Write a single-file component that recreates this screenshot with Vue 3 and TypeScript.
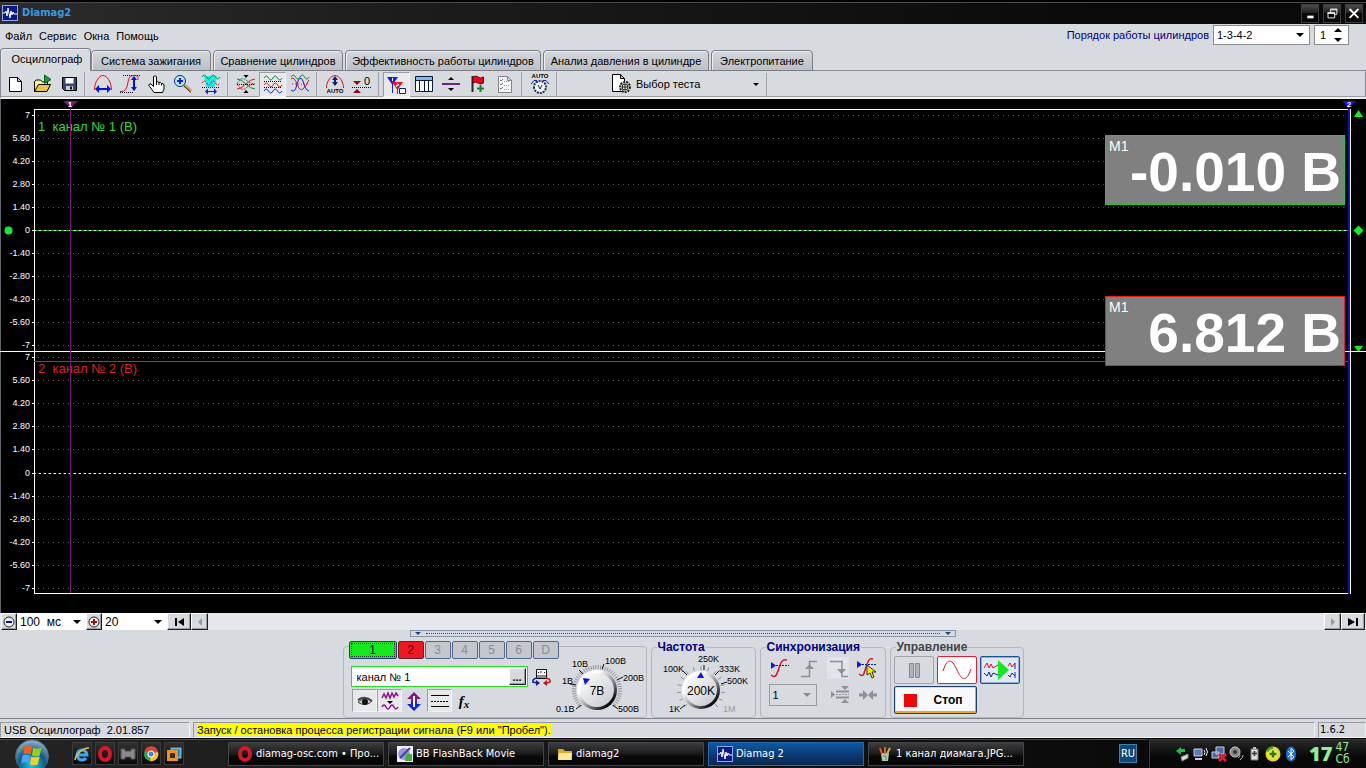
<script setup lang="ts">
import { ref } from 'vue'

interface Shape {
  d: string
  s?: string
  f?: string
  w?: number
  dash?: string
}
interface Tool {
  name: string
  shapes: Shape[]
  pressed?: boolean
  auto?: number
  text?: { x: number; y: number; t: string; size: number }
}

const wave = (y: number, a: number, x = 3): string =>
  `M${x} ${y} q2.25 ${-a} 4.5 0 t4.5 0 t4.5 0 t4.5 0`
const dots = (y: number, x1 = 3, x2 = 21): Shape => ({ d: `M${x1} ${y}.5 H${x2}`, s: '#000', dash: '1 1' })
const hArrow = (x1: number, x2: number, y: number): Shape[] => [
  { d: `M${x1} ${y} H${x2}`, s: '#0010e0', w: 2 },
  { d: `M${x1 - 1} ${y} l4 -4 v8z M${x2 + 1} ${y} l-4 -4 v8z`, f: '#0010e0' },
]
const vArrow = (x: number, y1: number, y2: number, c = '#0010e0'): Shape[] => [
  { d: `M${x} ${y1} V${y2}`, s: c, w: 2 },
  { d: `M${x} ${y1 - 1} l-3 4 h6z M${x} ${y2 + 1} l-3 -4 h6z`, f: c },
]
const RED = '#e01020'
const GREEN = '#0a8a3a'
const BLUE = '#1020e0'

const toolGroups: Tool[][] = [
  [
    { name: 'Новый', shapes: [{ d: 'M6.5 5.5 H14.5 L18.5 9.5 V19.5 H6.5z M14.5 5.5 V9.5 H18.5', s: '#000', f: '#fff' }] },
    {
      name: 'Открыть',
      shapes: [
        { d: 'M4.5 19.5 V9.5 L6.5 8 H10.5 L12.5 10 H17.5 V13', s: '#000', f: '#fff3a0' },
        { d: 'M4.5 19.5 L8.5 12.5 H20.5 L17 19.5z', s: '#000', f: '#e8c840' },
        { d: 'M14.5 3 L21 7.5 L14.5 11.5z', f: '#10a030', s: '#086020' },
      ],
    },
    {
      name: 'Сохранить',
      shapes: [
        { d: 'M5.5 5.5 H19.5 V18.5 H7.5 L5.5 16.5z', s: '#000', f: '#3c4474' },
        { d: 'M8.5 6 H16.5 V11.5 H8.5z', f: '#fff' },
        { d: 'M9 14 H16 V18 H9z', f: '#ccd' },
        { d: 'M13 14.5 H15 V17.5 H13z', f: '#111' },
      ],
    },
  ],
  [
    { name: 'Период', shapes: [{ d: 'M3.5 18 C3.5 10 8 3.5 12 3.5 S20.5 10 20.5 18', s: RED }, ...hArrow(5, 19, 17)] },
    {
      name: 'Амплитуда',
      shapes: [dots(3, 5, 22), dots(20, 2, 16), { d: 'M2 19.5 C13 21 7 3.5 15 3.5 S19 6 20 8', s: RED }, ...vArrow(16, 5, 18)],
    },
    {
      name: 'Рука',
      shapes: [{ d: 'M9 20.5 L4 13.5 Q3.5 11.5 6 12 L8.5 14.5 V4.5 Q10 3 11.5 4.5 V10 Q13 9 14 10.5 Q15.5 9.8 16.5 11.5 Q18.5 11 19 13 V17 L17.5 20.5z M11.5 10 V13 M14 10.5 V13 M16.5 11.5 V13.5', s: '#000', f: '#fff' }],
    },
    {
      name: 'Масштаб',
      shapes: [
        { d: 'M12 13 L19 19', s: '#caa060', w: 3 },
        { d: 'M12 14 L19 20.5', s: '#302010', w: 1 },
        { d: 'M2.5 9 a5.5 5.5 0 1 0 11 0 a5.5 5.5 0 1 0 -11 0', s: '#103080', f: '#b8e8ff' },
        { d: 'M8 6 V12 M5 9 H11', s: BLUE, w: 2 },
      ],
    },
    {
      name: 'Интервал',
      shapes: [
        { d: 'M5 4 H18 L15.5 15 H7.5z', f: '#20e8e8' },
        { d: wave(5, 4), s: GREEN },
        { d: wave(11, 4), s: RED, dash: '2 1' },
        dots(15),
        { d: 'M8 19.5 H16', s: BLUE },
        { d: 'M6 19.5 l3 -3 v6z M18 19.5 l-3 -3 v6z', f: BLUE },
      ],
    },
  ],
  [
    {
      name: 'Наложение',
      shapes: [
        { d: 'M3 7 Q7 7 12 12 T21 17', s: GREEN },
        { d: 'M3 17 Q7 17 12 12 T21 7', s: RED },
        { d: 'M3 12 Q7 4 12 8 T21 12', s: GREEN, dash: '2 1' },
        { d: 'M3 12 Q8 20 12 16 T21 12', s: RED, dash: '2 1' },
        dots(12),
        { d: 'M9.5 3 h5 l-2.5 3z M9.5 21 h5 l-2.5 -3z', f: '#000' },
      ],
    },
    {
      name: 'Раздельно',
      pressed: true,
      shapes: [{ d: wave(5, 4), s: GREEN }, dots(8), { d: wave(12, 4), s: RED }, dots(14), { d: wave(18, 4), s: BLUE }],
    },
    {
      name: 'Совместно',
      shapes: [
        { d: wave(5, 4), s: GREEN },
        { d: 'M3 7 Q6 4 9 12 T15 17 T21 8', s: RED },
        { d: 'M3 18 Q7 22 9 12 Q12 2 15 9 Q17 18 21 19', s: BLUE },
        { d: 'M4 12 H20', s: RED, dash: '1 2' },
      ],
    },
  ],
  [
    {
      name: 'Авто',
      auto: 21,
      shapes: [{ d: 'M3.5 16 C3.5 9 8 3.5 12 3.5 S20.5 9 20.5 16', s: RED }, ...vArrow(12, 5, 13, '#102080')],
    },
    {
      name: 'Ноль',
      text: { x: 14, y: 13, t: '0', size: 11 },
      shapes: [dots(15, 2, 22), { d: 'M3 9 h8 l-4 4z M3 21 h8 l-4 -4z', f: '#8a0820' }],
    },
  ],
  [
    {
      name: 'Маркеры',
      pressed: true,
      shapes: [
        { d: 'M2 4 H13 L7.5 12z', f: BLUE },
        { d: 'M7.5 4 V20', s: BLUE },
        { d: 'M7 9 H18 L12.5 17z', f: RED },
        { d: 'M12.5 9 V21', s: RED },
        { d: 'M7.5 5 V8 M11.5 11 H13.5 V12.5 H11.5 V14', s: '#fff' },
        { d: 'M14.5 15.5 H20.5 V20.5 H14.5z', s: '#102080', f: '#fff' },
      ],
    },
    {
      name: 'Таблица',
      shapes: [
        { d: 'M3.5 4.5 H20.5 V19.5 H3.5z', s: '#101838', f: '#fff' },
        { d: 'M4 5 H20 V8 H4z', f: '#80b8f0' },
        { d: 'M3.5 8.5 H20.5 M7.5 8 V19 M12.5 8 V19 M16.5 8 V19', s: '#101838' },
      ],
    },
    { name: 'Линия', shapes: [{ d: 'M3 12 H21', s: '#702080', w: 2 }, { d: 'M12 5 l3 3 h-6z M12 19 l3 -3 h-6z', f: '#000' }] },
    {
      name: 'Флаг',
      shapes: [
        { d: 'M6.5 4 V20', s: '#302020', w: 2 },
        { d: 'M7 5 Q10 3 12 5 T17.5 5 V11 Q15 13 12 11 T7 11z', f: '#e80818', s: '#700010' },
        { d: 'M14.5 13 V20 M11 16.5 H18', s: '#0a8a20', w: 2 },
      ],
    },
    {
      name: 'Список',
      shapes: [
        { d: 'M5.5 4.5 H14.5 L18.5 8.5 V20.5 H5.5z M14.5 4.5 V8.5 H18.5', s: '#808388', f: '#f4f4f6' },
        { d: 'M7 8 l1 1 2-2 M7 12 l1 1 2-2 M7 16 l1 1 2-2', s: '#707378' },
        { d: 'M11 9.5 H16 M11 13.5 H16 M11 17.5 H16', s: '#999', dash: '1 1' },
      ],
    },
  ],
  [
    {
      name: 'Автонастройка',
      auto: 6,
      shapes: [
        { d: 'M3 12 L6 8.5 H9 M21 12 L18 8.5 H15', s: '#1020a0' },
        { d: 'M6 15 a6 6 0 1 0 12 0 a6 6 0 1 0 -12 0', s: '#203050', f: '#f4f6fa', w: 2, dash: '2 1' },
        { d: 'M10 13 L12 17 L14 13', s: '#102080' },
      ],
    },
  ],
]

const tabs = [
  { t: 'Осциллограф', w: 91 },
  { t: 'Система зажигания', w: 120 },
  { t: 'Сравнение цилиндров', w: 130 },
  { t: 'Эффективность работы цилиндров', w: 196 },
  { t: 'Анализ давления в цилиндре', w: 166 },
  { t: 'Электропитание', w: 102 },
]
const activeTab = ref(0)
const order = ref('1-3-4-2')
const timeBase = ref('100')
const points = ref('20')
const channelName = ref('канал № 1')

const scale = ['7', '5.60', '4.20', '2.80', '1.40', '0', '-1.40', '-2.80', '-4.20', '-5.60', '-7']
const axis1 = scale.map((t, i) => ({ t, y: 16 + 23 * i }))
const axis2 = scale.map((t, i) => ({ t, y: 258 + Math.round(23.1 * i) }))
const axes = [...axis1, ...axis2]

const channels = ['1', '2', '3', '4', '5', '6', 'D']

function ticks(count: number, r1: number, r2: number): string {
  let d = ''
  for (let i = 0; i < count; i++) {
    const a = ((135 + (270 * i) / (count - 1)) * Math.PI) / 180
    d += `M${(Math.cos(a) * r1).toFixed(1)} ${(Math.sin(a) * r1).toFixed(1)}L${(Math.cos(a) * r2).toFixed(1)} ${(Math.sin(a) * r2).toFixed(1)}`
  }
  return d
}
const voltTicks = ticks(46, 21, 25)
const freqTicks = ticks(15, 20, 24)
const voltLabels = [
  { t: '0.1В', x: -41, y: 22 },
  { t: '1В', x: -35, y: -6 },
  { t: '10В', x: -25, y: -23 },
  { t: '100В', x: 8, y: -26 },
  { t: '200В', x: 26, y: -9 },
  { t: '500В', x: 21, y: 22 },
]
const freqLabels = [
  { t: '1K', x: -32, y: 22 },
  { t: '100K', x: -38, y: -18 },
  { t: '250K', x: -3, y: -28 },
  { t: '333K', x: 18, y: -18 },
  { t: '500K', x: 26, y: -6 },
]

const tasks = [
  { t: 'diamag-osc.com • Про...', icon: 'opera' },
  { t: 'BB FlashBack Movie', icon: 'flash' },
  { t: 'diamag2', icon: 'folder' },
  { t: 'Diamag 2', icon: 'diamag', active: true },
  { t: '1 канал диамага.JPG...', icon: 'paint' },
]
const quick = ['ie', 'opera', 'server', 'chrome', 'vm']
</script>

<template>
  <div class="screen">
    <header class="titlebar">
      <svg class="app-logo" viewBox="0 0 16 16">
        <rect width="16" height="16" fill="#8fa8e8" /><rect x="1" y="1" width="14" height="14" fill="#0a1a8c" />
        <path d="M1 8h2l1-2 1 5 1-8 2 10 1-7 1 4 1-3 1 2h3" fill="none" stroke="#fff" />
      </svg>
      <h1>Diamag2</h1>
      <div class="win-buttons">
        <button aria-label="Свернуть"><svg viewBox="0 0 18 19"><path d="M6 13.5h7" stroke="#fff" stroke-width="3" /></svg></button>
        <button aria-label="Восстановить">
          <svg viewBox="0 0 18 19"><path d="M7.5 8V4.5h7v6H12M4 8.5h8v6H4.5V9M4 9.5h8M7 5.5h8" fill="none" stroke="#fff" /></svg>
        </button>
        <button aria-label="Закрыть"><svg viewBox="0 0 18 19"><path d="M4 4.5l10 10M14 4.5l-10 10" stroke="#fff" stroke-width="2" /></svg></button>
      </div>
    </header>

    <div class="menubar">
      <nav>
        <a href="#">Файл</a><a href="#">Сервис</a><a href="#">Окна</a><a href="#">Помощь</a>
      </nav>
      <div class="order">
        <label for="order">Порядок работы цилиндров</label>
        <span class="combo order-combo">
          <select id="order" v-model="order"><option>1-3-4-2</option></select>
        </span>
        <span class="spin">
          <input aria-label="Цилиндр" value="1" />
          <svg viewBox="0 0 8 16"><path d="M0 5L4 1l4 4zM0 11l4 4 4-4z" /></svg>
        </span>
      </div>
    </div>

    <div class="tabs" role="tablist">
      <button
        v-for="(tab, i) in tabs"
        :key="tab.t"
        role="tab"
        class="tab"
        :class="{ active: i === activeTab }"
        :style="{ width: tab.w + 'px' }"
        @click="activeTab = i"
      >{{ tab.t }}</button>
    </div>

    <div class="toolbar">
      <div v-for="(group, g) in toolGroups" :key="g" class="tool-group">
        <button v-for="tool in group" :key="tool.name" class="tool" :class="{ pressed: tool.pressed }" :aria-label="tool.name">
          <svg viewBox="0 0 24 24">
            <path
              v-for="(p, i) in tool.shapes"
              :key="i"
              :d="p.d"
              :fill="p.f || 'none'"
              :stroke="p.s || 'none'"
              :stroke-width="p.w || 1"
              :stroke-dasharray="p.dash"
            />
            <text v-if="tool.auto" class="auto" x="12" :y="tool.auto">AUTO</text>
            <text v-if="tool.text" :x="tool.text.x" :y="tool.text.y" :font-size="tool.text.size">{{ tool.text.t }}</text>
          </svg>
        </button>
      </div>
      <button class="test-button">
        <svg viewBox="0 0 22 22">
          <path d="M2.5 1.5h8l4 4v13h-12zM10.5 1.5v4h4" fill="#fff" stroke="#000" />
          <circle cx="15" cy="14" r="5" fill="#d8d8d0" stroke="#222" stroke-width="2" stroke-dasharray="2 1" />
          <circle cx="15" cy="14" r="3" fill="#eee" stroke="#222" />
          <path d="M15 11v6M12 14h6" stroke="#222" />
        </svg>
        <span>Выбор теста</span>
        <i class="caret"></i>
      </button>
    </div>

    <main class="scope">
      <svg class="plot" font-size="9">
        <line v-for="(a, i) in axes" :key="'g' + i" x1="38" x2="99%" :y1="a.y + 0.5" :y2="a.y + 0.5" stroke="#585858" stroke-dasharray="1 4" />
        <g v-for="(a, i) in axes" :key="'a' + i">
          <text class="axis" x="30" :y="a.y + 3">{{ a.t }}</text>
          <path :d="`M32 ${a.y + 0.5}h3`" stroke="#fff" />
        </g>
        <text class="channel-label" x="38" y="32" fill="#38d838">1&nbsp; канал № 1 (В)</text>
        <text class="channel-label" x="38" y="274" fill="#d82020">2&nbsp; канал № 2 (В)</text>
        <line x1="34.5" x2="34.5" y1="10" y2="495" stroke="#fff" />
        <svg x="34" width="100%" height="514">
          <line x1="0" x2="100%" y1="10.5" y2="10.5" stroke="#fff" />
          <line x1="0" x2="100%" y1="494.5" y2="494.5" stroke="#fff" />
          <line x1="0" x2="100%" y1="131.5" y2="131.5" stroke="#10b020" />
          <line x1="0" x2="100%" y1="131.5" y2="131.5" stroke="#f0fff0" stroke-dasharray="2 3" />
          <line x1="0" x2="100%" y1="374.5" y2="374.5" stroke="#fff" stroke-dasharray="2 3" />
          <line x1="0" x2="100%" y1="262.5" y2="262.5" stroke="#e81818" />
        </svg>
        <svg x="100%" overflow="visible">
          <path d="M-15 0h15v514h-15z" fill="#000" />
          <line x1="-17" x2="-17" y1="6" y2="495" stroke="#1010c8" stroke-width="2" />
          <line x1="-15.5" x2="-15.5" y1="10" y2="495" stroke="#fff" />
          <path d="M-12 18h9l-4.5-7zM-12 247h9l-4.5 6z" fill="#10f020" />
          <path d="M-12.5 131.5l5-5 5 5-5 5z" fill="#10f020" />
          <path d="M-24 2h14l-7 7z" fill="#1010f0" />
          <text x="-17" y="8" fill="#fff" font-size="8" font-weight="bold" text-anchor="middle">2</text>
        </svg>
        <line x1="0" x2="100%" y1="252.5" y2="252.5" stroke="#fff" />
        <line x1="70.5" x2="70.5" y1="6" y2="494" stroke="#701870" />
        <path d="M63 2h15l-7.500 7z" fill="#801880" />
        <text x="70" y="8" fill="#fff" font-size="8" font-weight="bold" text-anchor="middle">1</text>
        <circle cx="8.5" cy="131.5" r="4" fill="#10f020" />
      </svg>
      <output class="readout first"><small>M1</small><b>-0.010 В</b></output>
      <output class="readout second"><small>M1</small><b>6.812 В</b></output>
    </main>

    <div class="scroll-row">
      <button class="raised zoom" aria-label="Уменьшить"><svg viewBox="0 0 14 14"><circle cx="7" cy="7" r="5" fill="#eef" stroke="#222" /><path d="M4 7h6" stroke="#1010a0" stroke-width="2" /></svg></button>
      <span class="combo time"><select v-model="timeBase" aria-label="Развёртка"><option value="100">100&nbsp; мс</option></select></span>
      <button class="raised zoom" aria-label="Увеличить"><svg viewBox="0 0 14 14"><circle cx="7" cy="7" r="5" fill="#fee" stroke="#222" /><path d="M4 7h6M7 4v6" stroke="#a01010" stroke-width="2" /></svg></button>
      <span class="combo count"><select v-model="points" aria-label="Масштаб"><option>20</option></select></span>
      <button class="raised wide" aria-label="В начало"><svg viewBox="0 0 14 14"><path d="M3 3h2v8H3zM12 3v8L6 7z" /></svg></button>
      <button class="raised" aria-label="Назад" disabled><svg viewBox="0 0 14 14"><path d="M9 3v8L5 7z" fill="#999" /></svg></button>
      <span class="track"></span>
      <button class="raised" aria-label="Вперёд" disabled><svg viewBox="0 0 14 14"><path d="M5 3v8l4-4z" fill="#999" /></svg></button>
      <button class="raised wide" aria-label="В конец"><svg viewBox="0 0 14 14"><path d="M10 3h2v8h-2zM2 3v8l7-4z" /></svg></button>
    </div>

    <div class="splitter"><i class="caret small"></i><span></span><i class="caret small"></i></div>

    <section class="panel">
      <div class="group channel-group">
        <div class="channel-left">
          <div class="channels">
            <button v-for="c in channels" :key="c" :class="'ch ch-' + c" :disabled="c > '2'">{{ c }}</button>
          </div>
          <div class="name-row">
            <div class="name-box">
              <input v-model="channelName" aria-label="Название канала" />
              <button class="raised" aria-label="Выбрать">...</button>
            </div>
            <svg class="swap" viewBox="0 0 19 20">
              <path d="M4.5 2.5h10v9h-10z" fill="#fff" stroke="#111" /><path d="M5 8h9v3H5z" fill="#8a9090" /><path d="M6 6l1-1M9 6V4M12 6l1-1" stroke="#111" />
              <path d="M5 11Q0 12 1 15l4 1" fill="none" stroke="#102090" stroke-width="1.5" /><path d="M4 13v6l4-3z" fill="#102090" />
              <path d="M14 11q5 1 4 4l-3 1" fill="none" stroke="#d01010" stroke-width="1.5" /><path d="M15 13v6l-4-3z" fill="#d01010" />
            </svg>
          </div>
          <div class="view-row">
            <button class="flat pressed" aria-label="Показать">
              <svg viewBox="0 0 24 22"><path d="M5 12Q12 6 19 11Q13 17 6 13z" fill="#ccc" stroke="#444" /><circle cx="12" cy="12" r="3" fill="#111" /><path d="M5 10q7-5 14 1" fill="none" stroke="#444" stroke-width="2" /></svg>
            </button>
            <button class="flat pressed" aria-label="Фильтр">
              <svg viewBox="0 0 24 22"><path d="M4 8l2-4 2 4 2-5 2 5 2-5 2 4 2-4 2 3" fill="none" stroke="#8a1090" stroke-width="1.5" /><path d="M9 11h6l-3 3z" /><path d="M4 17q2-4 4 0t4 0 4 0 4 0" fill="none" stroke="#8a1090" stroke-width="1.5" /></svg>
            </button>
            <button class="flat" aria-label="Инверсия">
              <svg viewBox="0 0 24 22"><path d="M12 2l7 7h-4v2H9V9H5z" fill="#801890" /><path d="M12 21l-7-7h4v-3h6v3h4z" fill="#1020e0" /><path d="M12 6v11" stroke="#fff" stroke-width="2" /></svg>
            </button>
            <button class="flat pressed" aria-label="Линии">
              <svg viewBox="0 0 24 22"><path d="M3 5.5h18M3 16.5h18" stroke="#000" /><path d="M3 11.5h18" stroke="#000" stroke-dasharray="2 1" /></svg>
            </button>
            <button class="flat fx" aria-label="Функция">f<sub>x</sub></button>
          </div>
        </div>
        <svg class="knob volt" viewBox="-38 -35 86 62" role="img" aria-label="7В">
          <defs>
            <linearGradient id="rim" x1="0" y1="0" x2="1" y2="1"><stop offset="0.3" stop-color="#fff" /><stop offset="0.6" stop-color="#888" /><stop offset="0.85" stop-color="#000" /></linearGradient>
            <linearGradient id="face" x1="0" y1="0" x2="1" y2="1"><stop offset="0" stop-color="#fff" /><stop offset="1" stop-color="#c4c7cd" /></linearGradient>
          </defs>
          <path :d="voltTicks" stroke="#8d9096" />
          <path d="M-14-16l-4-4M5-21l2-5M20-10l6-3M16 15l5 4M-16 15l-5 4M-21-5l-6-1" stroke="#111" />
          <circle r="20" fill="url(#rim)" /><circle r="17" fill="url(#face)" />
          <path d="M-14-12l7 1-5 6z" fill="#1010f0" />
          <text x="0" y="5" class="value">7В</text>
          <text v-for="l in voltLabels" :key="l.t" :x="l.x" :y="l.y">{{ l.t }}</text>
        </svg>
      </div>

      <fieldset class="group freq-group">
        <legend>Частота</legend>
        <svg class="knob freq" viewBox="-40 -35 90 62" role="img" aria-label="200K">
          <path :d="freqTicks" stroke="#8d9096" />
          <path d="M-14-15l-4-4M3-20v-5M14-15l4-4M20-6l6-2M-16 15l-5 4" stroke="#111" />
          <circle r="19" fill="url(#rim)" /><circle r="16" fill="url(#face)" />
          <path d="M-4-12h7l-3-6z" fill="#1010f0" />
          <text x="0" y="5" class="value">200K</text>
          <text v-for="l in freqLabels" :key="l.t" :x="l.x" :y="l.y">{{ l.t }}</text>
          <text x="22" y="22" class="off">1M</text>
        </svg>
      </fieldset>

      <fieldset class="group sync-group">
        <legend>Синхронизация</legend>
        <div class="sync-row">
          <button aria-label="Уровень"><svg viewBox="0 0 22 22"><path d="M2 18c5 4 6-1 8-7s3-9 8-8" fill="none" stroke="#e01020" stroke-width="1.5" /><path d="M4 8.5h16" stroke="#10208f" stroke-dasharray="2 1" /><path d="M2 5v7l5-3.5z" fill="#1010f0" /></svg></button>
          <button aria-label="Фронт" disabled><svg viewBox="0 0 22 22"><path d="M3 19.5h8.500V4.500H19" fill="none" stroke="#8d9095" stroke-width="1.500" /><path d="M7 12h9l-4.500-5z" fill="#8d9095" /></svg></button>
          <button aria-label="Спад" class="hatch" disabled><svg viewBox="0 0 22 22"><path d="M3 4.5h12v15h6" fill="none" stroke="#8d9095" stroke-width="1.5" /><path d="M10 12h9l-4.5 5z" fill="#8d9095" /></svg></button>
          <button aria-label="Ручной выбор"><svg viewBox="0 0 22 22"><path d="M3 17c5 4 5-1 7-7s3-9 7-8" fill="none" stroke="#e01020" stroke-width="1.5" /><path d="M3 7.5h17" stroke="#10208f" stroke-dasharray="2 1" /><path d="M1 4v7l5-3.5z" fill="#1010f0" /><path d="M11 8v10l3-2 2 5 2-1-2-5h4z" fill="#f8e800" stroke="#333" /></svg></button>
        </div>
        <div class="sync-row">
          <span class="combo sync-combo"><select aria-label="Канал синхронизации" disabled><option>1</option></select></span>
          <button aria-label="Сжать" disabled><svg viewBox="0 0 22 22"><path d="M7 7.5h13M7 13.5h13" stroke="#8d9095" stroke-width="2" /><path d="M7 10.5h13" stroke="#8d9095" stroke-dasharray="2 1" /><path d="M2 7v7l4-3.5zM12 2h8l-4 4zM12 19h8l-4-4z" fill="#8d9095" /></svg></button>
          <button aria-label="Свести" disabled><svg viewBox="0 0 22 22"><path d="M2 11h6M14 11h6" stroke="#8d9095" stroke-width="3" /><path d="M6 6v10l5-5zM16 6v10l-5-5z" fill="#8d9095" /></svg></button>
        </div>
      </fieldset>

      <fieldset class="group control-group">
        <legend>Управление</legend>
        <div class="control-grid">
          <button class="ctl" aria-label="Пауза" disabled><svg viewBox="0 0 34 22"><path d="M12.5 4.5h4v14h-4zM18.5 4.5h4v14h-4z" fill="#b0b3b8" stroke="#888" /></svg></button>
          <button class="ctl sine" aria-label="Синус"><svg viewBox="0 0 34 22"><path d="M3 12C8-4 13 2 17 11s9 14 14-1" fill="none" stroke="#e01020" /></svg></button>
          <button class="ctl play" aria-label="Воспроизвести"><svg viewBox="0 0 34 22"><path d="M1 9l3-5 2 5 2-4 2 4 5-3M25 7l2-3 2 4 3-4" fill="none" stroke="#e01020" /><path d="M1 14l3 3 2-4 2 5 2-4 5 2M25 16l2 2 2-4 3 3M32 4v6M32 13v6" fill="none" stroke="#1020c0" /><path d="M15 1l11 10-11 10z" fill="#10e820" /></svg></button>
          <button class="stop"><i></i><span>Стоп</span></button>
        </div>
      </fieldset>
    </section>

    <footer class="status">
      <span class="cell device">USB Осциллограф&nbsp; 2.01.857</span>
      <span class="cell hint"><mark>Запуск / остановка процесса регистрации сигнала (F9 или "Пробел").</mark></span>
      <span class="cell version">1.6.2</span>
    </footer>

    <div class="taskbar">
      <button class="start" aria-label="Пуск">
        <svg viewBox="0 0 36 30">
          <defs><radialGradient id="orb" cx="0.5" cy="0.75" r="0.8"><stop offset="0" stop-color="#20d0f0" /><stop offset="0.5" stop-color="#105888" /><stop offset="1" stop-color="#b0c8d8" /></radialGradient></defs>
          <circle cx="18" cy="18" r="17" fill="url(#orb)" stroke="#506878" />
          <path d="M10 8q4-2 8 0l-1 8q-4-2-8 0z" fill="#f06020" /><path d="M19 9q4 2 9 0l-2 8q-4 2-8 0z" fill="#90d020" />
          <path d="M8 17q4-2 8 0l-1 8q-4-2-8 0z" fill="#40a8f0" /><path d="M17 18q4 2 9 0l-2 8q-4 2-8 0z" fill="#f8d020" />
        </svg>
      </button>
      <div class="quick">
        <button v-for="q in quick" :key="q" :aria-label="q">
          <svg viewBox="0 0 16 16">
            <template v-if="q === 'ie'">
              <path d="M4 9h9a5 5 0 1 0-1 3" fill="none" stroke="#40a8f0" stroke-width="3" /><path d="M1 14C1 9 10 1 15 2" fill="none" stroke="#f0c030" stroke-width="1.5" />
            </template>
            <ellipse v-if="q === 'opera'" cx="8" cy="8" rx="5" ry="6" fill="none" stroke="#d81828" stroke-width="4" />
            <path v-if="q === 'server'" d="M1 3h4v2h6V3h4v10h-4v-2H5v2H1z" fill="#8a8a8a" stroke="#555" />
            <template v-if="q === 'chrome'">
              <circle cx="8" cy="8" r="7" fill="#30a850" /><path d="M8 8L1.500 5A7 7 0 0 1 15 6z" fill="#e04030" /><path d="M8 8l7-2a7 7 0 0 1-8 9z" fill="#f8c820" /><circle cx="8" cy="8" r="3.5" fill="#fff" /><circle cx="8" cy="8" r="2.5" fill="#4080f0" />
            </template>
            <template v-if="q === 'vm'">
              <path d="M5.5 2.5h9v9h-9z" fill="#2070a0" stroke="#60b8e8" stroke-width="2" /><path d="M2.5 5.5h8v8h-8z" fill="#303030" stroke="#f09020" stroke-width="3" />
            </template>
          </svg>
        </button>
      </div>
      <div class="tasks">
        <button v-for="task in tasks" :key="task.t" :class="{ current: task.active }">
          <svg viewBox="0 0 16 16">
            <ellipse v-if="task.icon === 'opera'" cx="8" cy="8" rx="5" ry="6" fill="none" stroke="#d81828" stroke-width="4" />
            <template v-if="task.icon === 'flash'"><path d="M0 0h16v16H0z" fill="#f0f0ff" /><circle cx="7" cy="8" r="6" fill="#a090e0" /><path d="M9 8h6v7H8z" fill="#40b040" /><path d="M3 12L13 2" stroke="#4040a0" stroke-width="2" /></template>
            <template v-if="task.icon === 'folder'"><path d="M1 3h5l2 2h7v9H1z" fill="#d8a830" /><path d="M2 7h13l-1 7H1z" fill="#ffe890" /></template>
            <template v-if="task.icon === 'diamag'"><path d="M0 0h16v16H0z" fill="#8fa8e8" /><path d="M1 1h14v14H1z" fill="#0a1a8c" /><path d="M1 8h2l1-2 1 5 1-8 2 10 1-7 1 4 1-3 1 2h3" fill="none" stroke="#fff" /></template>
            <template v-if="task.icon === 'paint'"><path d="M4 7h8l-1 8H5z" fill="#b8c8b0" /><path d="M5 8L3 2M8 8V1" stroke="#e06030" stroke-width="2" /><path d="M10 8l3-6" stroke="#d0b040" stroke-width="2" /><path d="M6 10h3v4" stroke="#40a060" fill="none" /></template>
          </svg>
          <span>{{ task.t }}</span>
        </button>
      </div>
      <button class="lang">RU</button>
      <div class="tray">
        <svg viewBox="0 0 16 16"><path d="M6 11l7-3v4l-6 3z" fill="#ddd" stroke="#888" /><path d="M1 5l5-4v2h4v3H6v3z" fill="#20c040" /></svg>
        <svg viewBox="0 0 16 16"><path d="M1 3h8v7H1z" fill="#5878b8" stroke="#ccd" /><path d="M2 13h7" stroke="#ccd" stroke-width="2" /><path d="M11 4q2 2 0 5M13 2q3 4 0 8" stroke="#eee" fill="none" /></svg>
        <svg viewBox="0 0 16 16"><path d="M5 1h8v7H5zM1 6h7v6H1z" fill="#4868b0" stroke="#ccd" /><path d="M8 8l7 7M15 8l-7 7" stroke="#e02030" stroke-width="2.5" /></svg>
        <svg viewBox="0 0 16 16"><circle cx="6" cy="6" r="5" fill="#888" stroke="#ccc" /><circle cx="6" cy="6" r="2" fill="#333" /><path d="M11 14q3-2 3-5M9 12q2-1 2-3" stroke="#bbb" fill="none" /></svg>
        <svg viewBox="0 0 16 16"><path d="M4 3h7v11H4z" fill="#ddd" stroke="#777" /><path d="M6 1h3v2H6z" fill="#bbb" /><path d="M7.5 5v5M5 7.5h5" stroke="#333" stroke-width="1.5" /></svg>
        <svg viewBox="0 0 16 16"><circle cx="8" cy="8" r="7.5" fill="#e8d820" /><path d="M1 5a7.500 7.500 0 0 1 7-4.500V8z" fill="#40a030" /><circle cx="8" cy="8" r="5" fill="#f4ea50" /><path d="M8 4.500v7M4.500 8h7" stroke="#208020" stroke-width="2.5" /></svg>
        <svg viewBox="0 0 16 16"><ellipse cx="8" cy="8" rx="5" ry="7.5" fill="#1870e0" /><path d="M5 5l6 6-3 2.500v-11L11 5l-6 6" fill="none" stroke="#fff" /></svg>
        <time class="clock"><b>17</b><span>47<br />Сб</span></time>
      </div>
    </div>
  </div>
</template>

<style>
html,
body {
  margin: 0;
  background: #d7dadf;
}
</style>

<style scoped>
.screen {
  display: flex;
  flex-direction: column;
  min-height: 100vh;
  font-family: 'Liberation Sans', Arial, sans-serif;
  font-size: 11px;
  line-height: 14px;
  color: #000;
  background: #d7dadf;
}
.screen * {
  box-sizing: border-box;
}
button,
input,
select {
  font: inherit;
  color: inherit;
  margin: 0;
  padding: 0;
  border: 0;
  border-radius: 0;
  background: none;
  outline: none;
}
svg {
  display: block;
}
.titlebar {
  display: flex;
  align-items: center;
  height: 24px;
  padding: 0 3px 0 2px;
  border-top: 2px solid #000;
  box-shadow: inset 0 1px #4a4a4a;
  background: linear-gradient(90deg, #2c2c2c, #1c1c1c 30%, #0a0a0b 80%);
}
.app-logo {
  width: 16px;
  height: 16px;
}
h1 {
  margin: 0 auto 0 4px;
  font: bold 11px/16px 'DejaVu Sans Condensed', 'DejaVu Sans', sans-serif;
  color: #3c9ae0;
}
.win-buttons {
  display: flex;
  gap: 4px;
}
.win-buttons button {
  width: 18px;
  height: 19px;
  border: 1px solid #3c3c3c;
  background: linear-gradient(#4a4a4a, #1c1c1c 50%, #080808 50%);
}
.menubar {
  display: flex;
  justify-content: space-between;
  align-items: center;
  height: 24px;
  padding: 0 17px 0 5px;
}
nav {
  display: flex;
  gap: 7px;
}
nav a {
  color: inherit;
  text-decoration: none;
}
.order {
  display: flex;
  align-items: center;
  gap: 4px;
  height: 20px;
  margin-bottom: 2px;
}
.order label {
  color: #000080;
}
.combo {
  display: grid;
  align-items: center;
  background: #fff;
}
.combo select {
  grid-area: 1 / 1;
  width: 100%;
  appearance: none;
  padding-left: 3px;
  color: #000;
  opacity: 1;
}
.combo::after {
  content: '';
  grid-area: 1 / 1;
  justify-self: end;
  margin-right: 5px;
  border: 4px solid transparent;
  border-top-color: #000;
  border-bottom: 0;
  pointer-events: none;
}
.order-combo {
  width: 97px;
  height: 20px;
  border: 1px solid #888c92;
}
.spin {
  display: flex;
  align-items: center;
  width: 35px;
  height: 20px;
  padding-left: 5px;
  border: 1px solid #888c92;
  background: #fff;
}
.spin input {
  width: 14px;
}
.spin svg {
  width: 8px;
  height: 16px;
}
.tabs {
  display: flex;
  align-items: flex-end;
  gap: 2px;
  height: 23px;
  box-shadow: inset 0 -1px #888c92;
}
.tab {
  height: 21px;
  border: 1px solid #7c8086;
  border-radius: 4px 4px 0 0;
  background: linear-gradient(#d4d7db, #bcc0c6);
  box-shadow: inset 1px 1px #eceef0;
  white-space: nowrap;
}
.tab.active {
  height: 23px;
  margin-right: -2px;
  padding: 0 0 2px 3px;
  border-bottom: 0;
  background: #d7dadf;
}
.toolbar {
  display: flex;
  align-items: center;
  height: 28px;
  border-left: 1px solid #888c92;
  border-bottom: 2px solid #f0f1f2;
  box-shadow: inset -1px 0 #888c92, inset 0 -1px #9a9da2;
}
.tool-group {
  display: flex;
  align-items: center;
  padding-right: 3px;
  margin-right: 4px;
  border-right: 1px solid #a0a3a8;
}
.tool-group:first-child {
  padding-right: 2px;
}
.tool {
  display: grid;
  place-items: center;
  width: 27px;
  height: 25px;
}
.tool svg {
  width: 24px;
  height: 24px;
}
.tool.pressed,
.flat.pressed {
  border: 1px solid;
  border-color: #9a9da2 #f4f4f4 #f4f4f4 #9a9da2;
  background: #e6e8ea;
}
.auto {
  font-size: 6px;
  font-weight: bold;
  text-anchor: middle;
}
.test-button {
  display: flex;
  align-items: center;
  gap: 4px;
  width: 206px;
  height: 23px;
  padding: 0 7px 0 49px;
  border-right: 1px solid #a0a3a8;
}
.test-button svg {
  width: 22px;
  height: 22px;
}
.caret {
  margin-left: auto;
  border: 3px solid transparent;
  border-top-color: #000;
  border-bottom: 0;
}
.scope {
  position: relative;
  flex: 1;
  background: #000;
  border-right: 1px solid #888c92;
  box-shadow: inset 1px 0 #606468;
}
.plot {
  width: calc(100% + 1px);
  height: 514px;
}
.axis {
  fill: #fff;
  text-anchor: end;
}
.channel-label {
  font-size: 13px;
}
.readout {
  position: absolute;
  right: 20px;
  display: flex;
  justify-content: space-between;
  width: 240px;
  height: 70px;
  padding-left: 3px;
  border: 1px solid #20d020;
  background: #808080;
  color: #fff;
}
.readout.first {
  top: 36px;
}
.readout.second {
  top: 197px;
  border-color: #e02020;
}
.readout small {
  font-size: 14px;
  line-height: 20px;
}
.readout b {
  padding-right: 3px;
  font-size: 55px;
  line-height: 72px;
  white-space: nowrap;
}
.scroll-row {
  display: flex;
  height: 17px;
  padding: 0 1px;
  background: #e6e7ea;
}
.scroll-row .combo {
  font-size: 12px;
}
.raised {
  display: grid;
  place-items: center;
  width: 17px;
  border: 1px solid;
  border-color: #fff #202020 #202020 #fff;
  box-shadow: inset -1px -1px #9a9da2;
  background: #d7dadf;
}
.raised svg {
  width: 14px;
  height: 14px;
}
.raised.zoom {
  width: 16px;
}
.raised.wide {
  width: 24px;
}
.time {
  width: 69px;
}
.count {
  width: 65px;
}
.track {
  flex: 1;
}
.splitter {
  display: flex;
  align-items: center;
  align-self: center;
  gap: 5px;
  width: 40%;
  height: 7px;
  padding: 0 4px;
  border: 1px solid #8a94a8;
}
.splitter .caret {
  margin: 0;
  border-top-color: #204080;
}
.splitter span {
  flex: 1;
  border-top: 1px dotted #304870;
}
.panel {
  display: flex;
  justify-content: center;
  align-items: stretch;
  gap: 4px;
  height: 81px;
  padding-top: 4px;
}
.group {
  min-width: 0;
  height: 77px;
  margin: 0;
  padding: 0;
  border: 1px solid #b4b7bc;
  border-radius: 4px;
}
legend {
  height: 12px;
  margin-left: 5px;
  padding: 0 1px;
  font-weight: bold;
  font-size: 12px;
  line-height: 12px;
  color: #000080;
}
.channel-group {
  display: flex;
  width: 304px;
  height: 72px;
  margin-top: 5px;
}
.channel-left {
  width: 210px;
  margin-left: 5px;
  margin-top: -6px;
}
.channels {
  display: flex;
  gap: 1px;
  background: #d7dadf;
}
.ch {
  width: 26px;
  height: 18px;
  border: 1px solid #506890;
  border-radius: 2px;
  background: #c4c7cc;
  font-size: 12px;
  color: #8a8d92;
}
.ch-1 {
  width: 48px;
  border-color: #104878;
  background: #18e820;
  color: #000;
  outline: 1px dotted #204020;
  outline-offset: -3px;
}
.ch-2 {
  border-color: #602030;
  background: #f01820;
  color: #400;
}
.name-row {
  display: flex;
  align-items: center;
  gap: 4px;
  margin: 7px 0 2px 2px;
}
.name-box {
  display: flex;
  width: 177px;
  height: 21px;
  padding: 1px;
  border: 1px solid #20e020;
  background: #fff;
}
.name-box input {
  flex: 1;
  min-width: 0;
  padding-left: 4px;
}
.name-box .raised {
  font-weight: bold;
  line-height: 8px;
}
.swap {
  width: 19px;
  height: 20px;
}
.view-row {
  display: flex;
  margin-left: 3px;
}
.flat {
  display: grid;
  place-items: center;
  width: 25px;
  height: 23px;
}
.flat svg {
  width: 24px;
  height: 22px;
}
.fx {
  display: block;
  font: italic bold 15px/20px 'Liberation Serif', serif;
}
.fx sub {
  font-size: 11px;
  line-height: 10px;
  vertical-align: -2px;
}
.knob {
  height: 62px;
  overflow: visible;
  font-size: 9px;
}
.knob .value {
  font-size: 12px;
  text-anchor: middle;
}
.knob .off {
  fill: #999ca2;
}
.volt {
  width: 86px;
  margin-top: 8px;
}
.freq-group {
  width: 105px;
}
.freq {
  width: 90px;
  margin: 2px 0 0 9px;
}
.sync-group {
  width: 126px;
}
.sync-row {
  display: flex;
  align-items: center;
  justify-content: space-between;
  height: 24px;
  margin: 3px 6px 0 8px;
}
.sync-row svg {
  width: 22px;
  height: 22px;
}
.hatch {
  background: #e2e4e7;
}
.sync-row .sync-combo {
  width: 48px;
  height: 22px;
  margin-right: 6px;
  border: 1px solid #989ba0;
  background: #d7dadf;
}
.sync-combo::after {
  border-top-color: #8a8d92;
}
.control-group {
  width: 134px;
}
.control-group legend {
  color: #404448;
}
.control-grid {
  display: grid;
  grid-template-columns: repeat(3, 40px);
  gap: 2px 3px;
  margin: 3px 0 0 3px;
}
.ctl {
  display: grid;
  place-items: center;
  height: 28px;
  border: 1px solid #a0a3a8;
  border-radius: 2px;
}
.ctl svg {
  width: 34px;
  height: 22px;
}
.sine {
  border-color: #e02030;
  background: #fff;
}
.play {
  border-color: #1850a0;
  box-shadow: inset 0 0 0 1px #90b0e0;
  background: #e4e8f4;
}
.stop {
  grid-column: 1 / 3;
  display: flex;
  align-items: center;
  height: 28px;
  padding-left: 9px;
  border: 1px solid #204070;
  border-radius: 2px;
  box-shadow: inset -1px -2px #e8a830, inset 1px 1px #f8d890;
  background: #f8f8f8;
  font-size: 12px;
  font-weight: bold;
}
.stop i {
  width: 13px;
  height: 13px;
  background: #f00808;
}
.stop span {
  margin-left: 17px;
}
.status {
  display: flex;
  gap: 3px;
  height: 20px;
  padding-top: 3px;
  border-top: 1px solid #80848a;
}
.cell {
  height: 16px;
  border: 1px solid;
  border-color: #989ba0 #f4f4f4 #f4f4f4 #989ba0;
  padding: 0 3px;
  white-space: nowrap;
}
.device {
  width: 190px;
}
.hint {
  flex: 1;
}
.hint mark {
  background: #ff0;
}
.version {
  width: 48px;
  padding: 0 1px;
  font-family: 'DejaVu Sans Condensed', 'DejaVu Sans', sans-serif;
}
.taskbar {
  display: flex;
  height: 30px;
  border-top: 1px solid #000;
  box-shadow: inset 0 1px #505050;
  background: linear-gradient(90deg, #242424, #161616 40%, #060607);
  color: #fff;
  font-family: 'DejaVu Sans Condensed', 'DejaVu Sans', sans-serif;
  font-size: 11px;
}
.start {
  margin-left: 14px;
  overflow: hidden;
}
.start svg {
  width: 36px;
  height: 29px;
}
.quick {
  display: flex;
  gap: 3px;
  align-items: center;
  margin-left: 22px;
}
.quick button {
  display: grid;
  place-items: center;
  width: 20px;
  height: 23px;
  border: 1px solid #3a3a3a;
  background: linear-gradient(#303030, #0a0a0a);
}
.quick svg {
  width: 16px;
  height: 16px;
}
.tasks {
  display: flex;
  flex: 1;
  gap: 4px;
  align-items: center;
  margin: 0 95px 0 44px;
}
.tasks button {
  display: flex;
  flex: 1 1 0;
  min-width: 0;
  align-items: center;
  gap: 3px;
  height: 24px;
  padding-left: 8px;
  border: 1px solid #444;
  background: linear-gradient(#3c3d3f, #1a1a1b 50%, #080808 60%);
  white-space: nowrap;
}
.tasks button.current {
  border-color: #2868b0;
  background: linear-gradient(#0c5aa4, #0a3c78 50%, #082850);
}
.tasks svg {
  width: 16px;
  height: 16px;
}
.lang {
  align-self: center;
  width: 18px;
  height: 19px;
  border: 1px solid #4080b0;
  background: #104878;
}
.tray {
  display: flex;
  align-items: center;
  gap: 2px;
  width: 218px;
  margin-left: 11px;
  padding-left: 26px;
  border-left: 1px solid #000;
  box-shadow: inset 1px 1px #3c3c3c;
  background: linear-gradient(#2a2a2a, #080808 60%);
}
.tray svg {
  width: 16px;
  height: 16px;
}
.clock {
  display: flex;
  margin-left: 8px;
  color: #90f090;
}
.clock b {
  font: 800 20px/26px 'Open Sans', sans-serif;
}
.clock span {
  margin-left: 3px;
  font-size: 12px;
  line-height: 12px;
}
</style>
